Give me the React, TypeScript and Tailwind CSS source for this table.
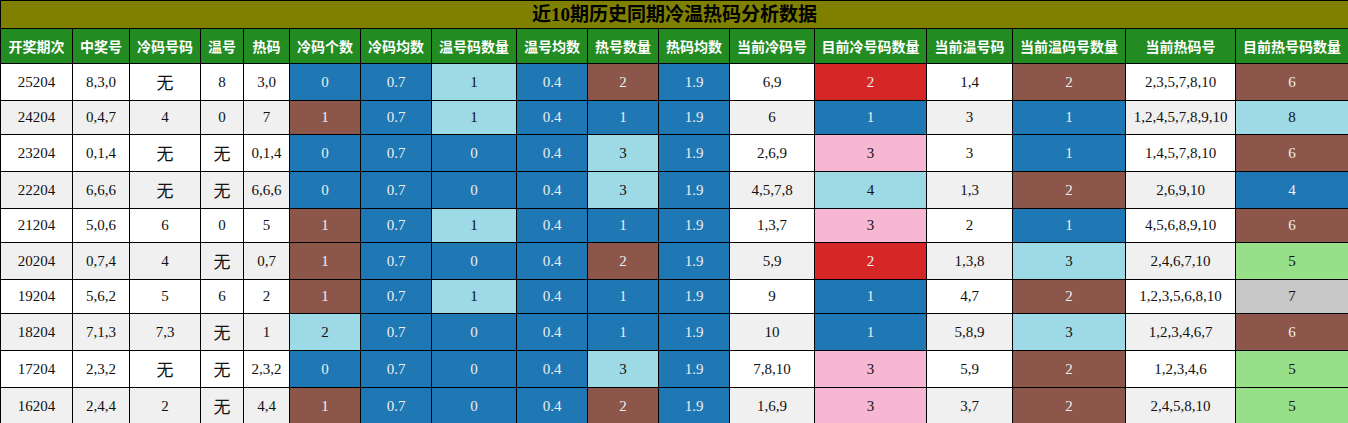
import React from 'react';

type Cell = string | [string, string];

// colour keys for the filled cells
const fills: Record<string, string> = {
  b: 'bg-[#1f77b4] text-[#eeeeee]',
  n: 'bg-[#8c564b] text-[#eeeeee]',
  r: 'bg-[#d62728] text-[#eeeeee]',
  c: 'bg-[#9edae5] text-[#111]',
  p: 'bg-[#f7b6d2] text-[#111]',
  g: 'bg-[#98df8a] text-[#111]',
  y: 'bg-[#c7c7c7] text-[#111]',
};

const headers = [
  '开奖期次', '中奖号', '冷码号码', '温号', '热码', '冷码个数', '冷码均数', '温号码数量', '温号均数',
  '热号数量', '热码均数', '当前冷码号', '目前冷号码数量', '当前温号码', '当前温码号数量', '当前热码号', '目前热号码数量',
];

const colWidths = [
  'w-[72px]', 'w-[57px]', 'w-[71px]', 'w-[43px]', 'w-[46px]', 'w-[71px]', 'w-[71px]', 'w-[85px]', 'w-[71px]',
  'w-[71px]', 'w-[71px]', 'w-[85px]', 'w-[112px]', 'w-[86px]', 'w-[113px]', 'w-[110px]', 'w-[113px]',
];

const rows: Cell[][] = [
  ['25204', '8,3,0', '无', '8', '3,0', ['0', 'b'], ['0.7', 'b'], ['1', 'c'], ['0.4', 'b'], ['2', 'n'], ['1.9', 'b'], '6,9', ['2', 'r'], '1,4', ['2', 'n'], '2,3,5,7,8,10', ['6', 'n']],
  ['24204', '0,4,7', '4', '0', '7', ['1', 'n'], ['0.7', 'b'], ['1', 'c'], ['0.4', 'b'], ['1', 'b'], ['1.9', 'b'], '6', ['1', 'b'], '3', ['1', 'b'], '1,2,4,5,7,8,9,10', ['8', 'c']],
  ['23204', '0,1,4', '无', '无', '0,1,4', ['0', 'b'], ['0.7', 'b'], ['0', 'b'], ['0.4', 'b'], ['3', 'c'], ['1.9', 'b'], '2,6,9', ['3', 'p'], '3', ['1', 'b'], '1,4,5,7,8,10', ['6', 'n']],
  ['22204', '6,6,6', '无', '无', '6,6,6', ['0', 'b'], ['0.7', 'b'], ['0', 'b'], ['0.4', 'b'], ['3', 'c'], ['1.9', 'b'], '4,5,7,8', ['4', 'c'], '1,3', ['2', 'n'], '2,6,9,10', ['4', 'b']],
  ['21204', '5,0,6', '6', '0', '5', ['1', 'n'], ['0.7', 'b'], ['1', 'c'], ['0.4', 'b'], ['1', 'b'], ['1.9', 'b'], '1,3,7', ['3', 'p'], '2', ['1', 'b'], '4,5,6,8,9,10', ['6', 'n']],
  ['20204', '0,7,4', '4', '无', '0,7', ['1', 'n'], ['0.7', 'b'], ['0', 'b'], ['0.4', 'b'], ['2', 'n'], ['1.9', 'b'], '5,9', ['2', 'r'], '1,3,8', ['3', 'c'], '2,4,6,7,10', ['5', 'g']],
  ['19204', '5,6,2', '5', '6', '2', ['1', 'n'], ['0.7', 'b'], ['1', 'c'], ['0.4', 'b'], ['1', 'b'], ['1.9', 'b'], '9', ['1', 'b'], '4,7', ['2', 'n'], '1,2,3,5,6,8,10', ['7', 'y']],
  ['18204', '7,1,3', '7,3', '无', '1', ['2', 'c'], ['0.7', 'b'], ['0', 'b'], ['0.4', 'b'], ['1', 'b'], ['1.9', 'b'], '10', ['1', 'b'], '5,8,9', ['3', 'c'], '1,2,3,4,6,7', ['6', 'n']],
  ['17204', '2,3,2', '无', '无', '2,3,2', ['0', 'b'], ['0.7', 'b'], ['0', 'b'], ['0.4', 'b'], ['3', 'c'], ['1.9', 'b'], '7,8,10', ['3', 'p'], '5,9', ['2', 'n'], '1,2,3,4,6', ['5', 'g']],
  ['16204', '2,4,4', '2', '无', '4,4', ['1', 'n'], ['0.7', 'b'], ['0', 'b'], ['0.4', 'b'], ['2', 'n'], ['1.9', 'b'], '1,6,9', ['3', 'p'], '3,7', ['2', 'n'], '2,4,5,8,10', ['5', 'g']],
];

export default function App() {
  return (
    <div className="bg-white w-[1348px]">
      <table className="table-fixed border-collapse w-[1348px] text-center font-['Liberation_Serif','Noto_Sans_CJK_SC',serif]">
        <colgroup>
          {colWidths.map((w, i) => (
            <col key={i} className={w} />
          ))}
        </colgroup>
        <thead>
          <tr>
            <th
              colSpan={17}
              className="border border-black bg-[#808000] text-black text-[19px] font-bold leading-[27px] p-0"
            >
              近10期历史同期冷温热码分析数据
            </th>
          </tr>
          <tr>
            {headers.map((h) => (
              <th
                key={h}
                className="border border-black bg-[#228b22] text-white text-[14px] font-bold leading-[20px] py-[7px] px-0 whitespace-nowrap font-['Noto_Sans_CJK_SC',sans-serif]"
              >
                {h}
              </th>
            ))}
          </tr>
        </thead>
        <tbody>
          {rows.map((row, ri) => (
            <tr key={ri} className={ri % 2 === 0 ? 'bg-white' : 'bg-[#f0f0f0]'}>
              {row.map((cell, ci) => {
                const text = typeof cell === 'string' ? cell : cell[0];
                const fill = typeof cell === 'string' ? 'text-[#111]' : fills[cell[1]];
                return (
                  <td
                    key={ci}
                    className={`border border-black text-[15px] leading-[17px] py-[8px] px-0 whitespace-nowrap ${fill}`}
                  >
                    {text === '无' ? (
                      <span className="inline-block text-[17px] leading-[20px] align-middle font-['Noto_Sans_CJK_SC',sans-serif]">
                        无
                      </span>
                    ) : (
                      text
                    )}
                  </td>
                );
              })}
            </tr>
          ))}
        </tbody>
      </table>
    </div>
  );
}
